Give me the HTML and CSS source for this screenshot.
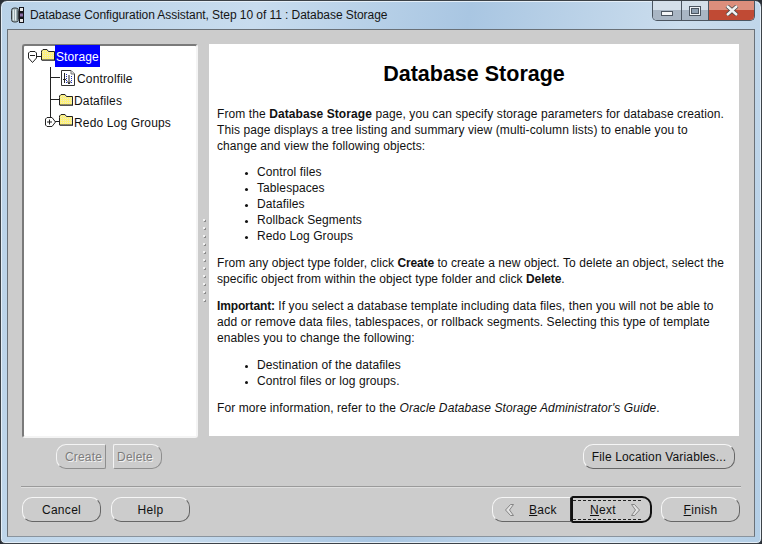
FILE: index.html
```html
<!DOCTYPE html>
<html lang="en">
<head>
<meta charset="utf-8">
<title>Database Configuration Assistant</title>
<link rel="stylesheet" href="styles.css">
</head>
<body>
<div class="window">
  <header class="titlebar">
    <svg class="app-icon" width="14" height="16" viewBox="0 0 14 16">
      <rect x="1.500" y="1" width="7" height="14" rx="2.500" fill="#9fb0b4" stroke="#3a4044"/>
      <path d="M3.500 2.500v11" stroke="#dfe8ea"/><path d="M5.500 2.500v11" stroke="#e9f0f2"/><path d="M7.500 3v10" stroke="#6c7a80"/>
      <rect x="9" y="0" width="5" height="16" fill="#15151c"/>
      <rect x="10" y="1" width="3" height="3" fill="#e6e6e6"/>
      <rect x="10" y="6.500" width="3" height="3" fill="#8c6fa8"/>
      <rect x="10" y="12" width="3" height="3" fill="#e6e6e6"/>
    </svg>
    <span class="title-text">Database Configuration Assistant, Step 10 of 11 : Database Storage</span>
    <div class="caption-buttons">
      <div class="cap cap-min"><span class="min-glyph"></span></div>
      <div class="cap cap-max"><span class="max-glyph"></span></div>
      <div class="cap cap-close"><svg width="16" height="11" viewBox="0 0 16 11"><path d="M3 1l10 9M13 1L3 10" stroke="#444" stroke-width="4"/><path d="M3 1l10 9M13 1L3 10" stroke="#f2f2f2" stroke-width="2.400"/></svg></div>
    </div>
  </header>
  <div class="client">
    <div class="panels">
      <nav class="tree">
        <div class="node root">
          <svg class="expander" width="9" height="12" viewBox="0 0 9 12"><path d="M2 .5h5l1.500 1.500v5l-4 4.500-4-4.500v-5z" fill="#fff" stroke="#222"/><path d="M2 4.500h5" stroke="#222"/></svg>
          <svg class="folder" width="14" height="12" viewBox="0 0 14 12"><use href="#folder-shape"/></svg>
          <span class="label selected">Storage</span>
        </div>
        <div class="children">
          <div class="node child file-node">
            <svg class="doc" width="14" height="16" viewBox="0 0 14 16"><path d="M.5.5h9.500l3.500 3.500v11.500h-13z" fill="#fff" stroke="#333"/><path d="M10 .5v3.500h3.500" fill="#ddd" stroke="#777"/><path d="M3.500 3v10M2 9.500h3M8 5v9" stroke="#222"/><path d="M5.500 4v9M10.500 6v7" stroke="#2233bb" stroke-dasharray="1 1"/><path d="M6.500 11.500l1.500 2.500 1.500-2.500" fill="none" stroke="#222"/></svg>
            <span class="label">Controlfile</span>
          </div>
          <div class="node child">
            <svg class="folder" width="14" height="12" viewBox="0 0 14 12"><use href="#folder-shape"/></svg>
            <span class="label">Datafiles</span>
          </div>
          <div class="node child redo">
            <svg class="expander plus" width="11" height="10" viewBox="0 0 11 10"><path d="M2 .5h5l3.500 4.500-3.500 4.500h-5l-1.500-1.500v-6z" fill="#fff" stroke="#222"/><path d="M2 5h5M4.500 2.500v5" stroke="#222"/></svg>
            <svg class="folder" width="14" height="12" viewBox="0 0 14 12"><use href="#folder-shape"/></svg>
            <span class="label">Redo Log Groups</span>
          </div>
        </div>
      </nav>
      <div class="splitter">
        <i></i><i></i><i></i><i></i><i></i><i></i><i></i><i></i><i></i><i></i><i></i>
      </div>
      <main class="content">
        <h1>Database Storage</h1>
        <p class="intro">From the <b>Database Storage</b> page, you can specify storage parameters for database creation. This page displays a tree listing and summary view (multi-column lists) to enable you to change and view the following objects:</p>
        <ul>
          <li>Control files</li>
          <li>Tablespaces</li>
          <li>Datafiles</li>
          <li>Rollback Segments</li>
          <li>Redo Log Groups</li>
        </ul>
        <p class="tight">From any object type folder, click <b>Create</b> to create a new object. To delete an object, select the specific object from within the object type folder and click <b>Delete</b>.</p>
        <p class="loose"><b>Important:</b> If you select a database template including data files, then you will not be able to add or remove data files, tablespaces, or rollback segments. Selecting this type of template enables you to change the following:</p>
        <ul>
          <li>Destination of the datafiles</li>
          <li>Control files or log groups.</li>
        </ul>
        <p>For more information, refer to the <i>Oracle Database Storage Administrator's Guide</i>.</p>
      </main>
    </div>
    <div class="action-row">
      <div class="tree-actions">
        <button class="btn disabled btn-left" disabled>Create</button>
        <button class="btn disabled btn-right" disabled>Delete</button>
      </div>
      <button class="btn file-loc">File Location Variables...</button>
    </div>
    <hr class="divider">
    <footer class="nav-row">
      <button class="btn wide">Cancel</button>
      <button class="btn wide">Help</button>
      <div class="spacer"></div>
      <div class="pair">
        <button class="btn back">
          <svg width="9" height="12" viewBox="0 0 9 12"><path d="M8.500.5h-3l-5 5.500 5 5.500h3l-4-5.500z" fill="#e2e2e2" stroke="#858585"/></svg>
          <span><u>B</u>ack</span>
        </button>
        <button class="btn next">
          <span class="focus-line">
            <span><u>N</u>ext</span>
            <svg width="9" height="12" viewBox="0 0 9 12"><path d="M.5.5h3l5 5.500-5 5.500h-3l4-5.500z" fill="#e2e2e2" stroke="#858585"/></svg>
          </span>
        </button>
      </div>
      <button class="btn wide"><u>F</u>inish</button>
    </footer>
  </div>
</div>
<svg class="defs" width="0" height="0">
  <defs>
    <pattern id="dither" width="2" height="2" patternUnits="userSpaceOnUse"><rect width="2" height="2" fill="#fff27a"/><rect width="1" height="1" fill="#e8e8d0"/></pattern>
    <g id="folder-shape"><path d="M.5 3.500v-1.500l1.500-1.500h4l1.500 2h6v8.500h-13z" fill="url(#dither)" stroke="#222"/><path d="M1 11.500h13" stroke="#555"/></g>
  </defs>
</svg>
</body>
</html>
```
FILE: styles.css
```css
* { box-sizing: border-box; }
html, body { margin: 0; padding: 0; height: 100%; }
body { width: 762px; height: 544px; overflow: hidden; background: #2a2f36; font-family: "Liberation Sans", Arial, sans-serif; font-size: 12px; color: #000; }
.defs { position: absolute; }
.window { width: 762px; height: 544px; border: 1px solid #3c4248; border-radius: 7px 7px 5px 5px; padding: 0 6px 6px; display: flex; flex-direction: column; background: linear-gradient(100deg, #b9d2e8 0%, #c8dcee 30%, #a9c6e2 55%, #cbdded 80%, #b3cee6 100%); box-shadow: inset 0 0 0 1px #e4eef7; overflow: hidden; }
.titlebar { height: 28px; flex: none; display: flex; align-items: center; position: relative; }
.app-icon { margin-left: 3px; flex: none; }
.title-text { margin-left: 6px; font-size: 12px; color: #151515; margin-top: -1px; letter-spacing: -.06px; }
.caption-buttons { position: absolute; top: 0; right: 0; height: 20px; display: flex; border: 1px solid #4b5560; border-top: none; border-radius: 0 0 5px 5px; overflow: hidden; }
.cap { height: 19px; display: flex; align-items: center; justify-content: center; }
.cap-min { width: 29px; background: linear-gradient(#d4dfe9 0 45%, #a9b6c4 50% 100%); border-right: 1px solid #4b5560; }
.cap-max { width: 27px; background: linear-gradient(#d4dfe9 0 45%, #a9b6c4 50% 100%); border-right: 1px solid #4b5560; }
.cap-close { width: 45px; background: linear-gradient(#dc8e7c 0 45%, #c04a34 50% 100%); }
.min-glyph { width: 12px; height: 5px; background: #f4f6f8; border: 1px solid #4b5560; margin-top: 6px; }
.max-glyph { width: 12px; height: 10px; background: #f0f3f6; border: 1px solid #4b5560; display: flex; align-items: center; justify-content: center; }
.max-glyph::after { content: ""; width: 6px; height: 4px; background: #8fa0b2; border: 1px solid #4b5560; }
.client { flex: 1; min-height: 0; background: #cccccc; border: 1px solid #6a7178; border-bottom-color: #8a949e; padding: 14px 14px 0 14px; display: flex; flex-direction: column; }
.panels { display: flex; height: 394px; flex: none; }
.tree { width: 176px; height: 394px; flex: none; background: #fff; border: 2px solid; border-color: #7a7a7a #f4f4f4 #f4f4f4 #7a7a7a; border-radius: 3px; padding: 0 0 0 4px; }
.node { display: flex; align-items: center; height: 22px; position: relative; }
.root { margin-top: -1px; }
.expander { flex: none; }
.root .expander { margin-top: 1px; }
.root .folder { margin-left: 4px; margin-top: -3px; }
.root::before { content: ""; position: absolute; left: 9px; top: 11px; width: 4px; border-top: 1px solid #222; }
.folder { flex: none; margin-top: -1px; }
.redo .folder { margin-top: -4px; }
.label { padding: 2px 2px 0; line-height: 20px; letter-spacing: .15px; color: #111; }
.selected { background: #0000ff; color: #fff; padding: 2px 1px 0 1px; letter-spacing: .1px; }
.children { margin-left: 22px; border-left: 1px solid #222; height: 55px; }
.child { padding-left: 8px; }
.child::before { content: ""; position: absolute; left: 0; top: 10px; width: 9px; border-top: 1px solid #222; }
.file-node { padding-left: 10px; }
.child .label { margin-left: -1px; }
.file-node .label { margin-left: 0; }
.child .plus { position: absolute; left: -6px; top: 6px; }
.splitter { width: 11px; flex: none; padding-top: 175px; display: flex; flex-direction: column; align-items: center; gap: 6px; }
.splitter i { display: block; width: 2px; height: 2px; background: #f2f2f2; box-shadow: 1px 1px 0 #8c8c8c; }
.content { width: 530px; height: 392px; flex: none; background: #fff; padding: 16px 8px 0; line-height: 16px; letter-spacing: .09px; color: #111; }
h1 { margin: 0 0 18px; font-size: 21.5px; line-height: 28px; font-weight: 700; text-align: center; letter-spacing: 0; color: #000; }
p { margin: 0 0 11px; }
.tight { letter-spacing: .07px; }
.tight b, .loose b { letter-spacing: -.15px; }
.loose { letter-spacing: .1px; }
ul { margin: 0 0 11px; padding: 0 0 0 40px; }
.intro { margin-bottom: 10px; }
li { line-height: 16px; }
li::marker { font-size: 9px; }
.action-row { height: 25px; flex: none; margin-top: 6px; display: flex; justify-content: space-between; }
.tree-actions { margin-left: 34px; display: flex; gap: 7px; }
.btn { font-family: "Liberation Sans", Arial, sans-serif; font-size: 12px; letter-spacing: .3px; height: 25px; padding: 0; background: #cccccc; color: #111; border: 1px solid; border-color: #f6f6f6 #666 #666 #f6f6f6; border-radius: 10px; display: flex; align-items: center; justify-content: center; }
.btn.disabled { color: #7d7d7d; text-shadow: 1px 1px 0 #f2f2f2; letter-spacing: .2px; border-color: #f4f4f4 #8e8e8e #8e8e8e #f4f4f4; }
.btn-left { width: 50px; padding-left: 5px; border-radius: 10px 2px 2px 10px; }
.btn-right { width: 49px; padding-right: 5px; border-radius: 2px 10px 10px 2px; }
.file-loc { width: 152px; margin-right: 5px; letter-spacing: .15px; }
.divider { width: 720px; height: 2px; margin: 17px 0 0 -1px; border: none; border-top: 1px solid #9a9a9a; border-bottom: 1px solid #dedede; flex: none; }
.nav-row { display: flex; flex: none; margin-top: 9px; height: 25px; }
.wide { width: 79px; }
.wide + .wide { margin-left: 10px; }
.spacer { flex: 1; }
.pair { display: flex; margin-right: 9px; }
.back { width: 79px; border-radius: 10px 0 0 10px; justify-content: flex-start; padding-left: 12px; gap: 15px; border-right-color: #222; }
.next { width: 81px; height: 27px; margin-top: -1px; border: 2px solid #111; border-radius: 2px 10px 10px 2px; justify-content: flex-start; }
.focus-line { width: 68px; height: 20px; margin-left: 0; padding-left: 17px; display: flex; align-items: center; gap: 15px; border-top: 1px dashed #222; border-bottom: 1px dashed #222; }
.next u, .back u, .wide u { text-decoration: underline; }
```
